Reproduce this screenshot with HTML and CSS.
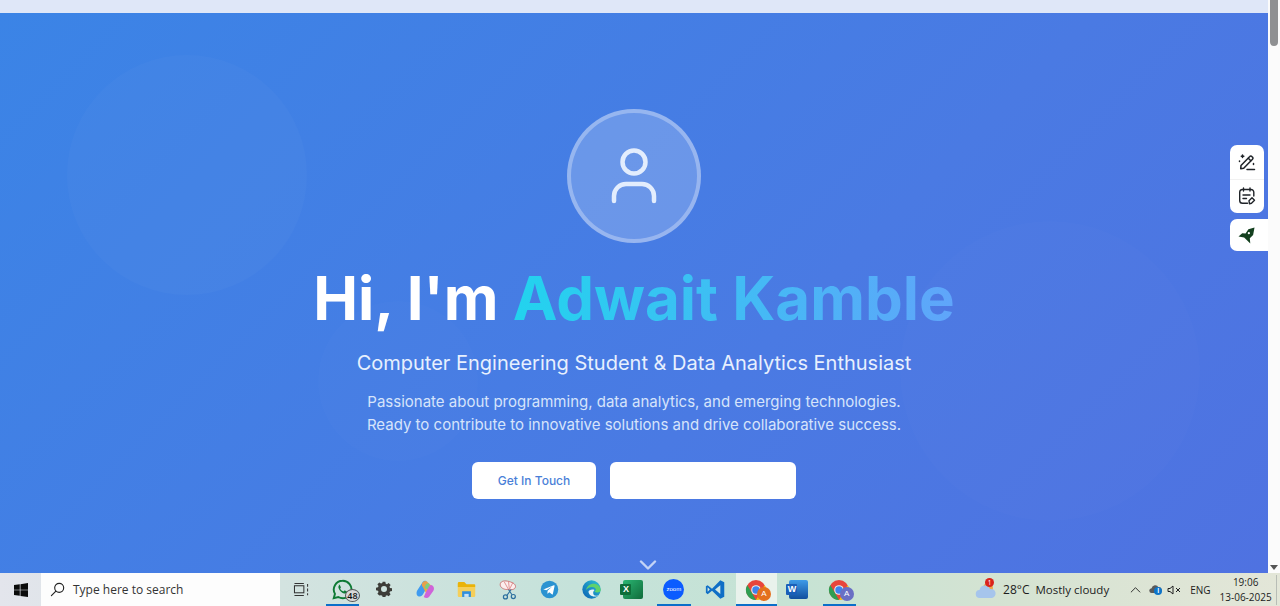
FILE: index.html
```html
<!DOCTYPE html>
<html lang="en">
<head>
<meta charset="utf-8">
<title>Adwait Kamble</title>
<link rel="stylesheet" href="styles.css">
</head>
<body>
<div class="screen">
  <div class="viewport">
    <main class="page">
      <div class="topstrip"></div>
      <section class="hero">
        <span class="blob blob-a"></span>
        <span class="blob blob-b"></span>
        <span class="blob blob-c"></span>
        <div class="avatar">
          <svg class="avatar-icon" viewBox="0 0 46 58" fill="none" stroke="#e3edfd" stroke-width="4.500" stroke-linecap="round">
            <circle cx="23" cy="15" r="11.500"/>
            <path d="M3 54V49a12 12 0 0 1 12-12h16a12 12 0 0 1 12 12v5"/>
          </svg>
        </div>
        <h1 class="title">Hi, I'm <span class="name">Adwait Kamble</span></h1>
        <h2 class="subtitle">Computer Engineering Student &amp; Data Analytics Enthusiast</h2>
        <p class="lead">Passionate about programming, data analytics, and emerging technologies.<br>Ready to contribute to innovative solutions and drive collaborative success.</p>
        <div class="actions">
          <a class="btn btn-touch">Get In Touch</a>
          <a class="btn btn-blank"></a>
        </div>
        <svg class="scroll-cue" viewBox="0 0 18 10" fill="none" stroke="#c3d3f6" stroke-width="2.400" stroke-linecap="round" stroke-linejoin="round"><path d="M2 1.500l7 7 7-7"/></svg>
      </section>
      <aside class="widget widget-tools">
        <button class="widget-btn">
          <svg viewBox="0 0 18 18" fill="none" stroke="#1f2328" stroke-width="1.500" stroke-linecap="round" stroke-linejoin="round"><path d="M3 12.500L11.800 3.500a1.300 1.300 0 0 1 2 0l.7.700a1.300 1.300 0 0 1 0 2L5.700 15.200l-3 .5z"/><path d="M10.300 5.200l2.500 2.500"/><path d="M9 16.500h7.500"/><path d="M4.500 2v2.500M3.300 3.200h2.500M1.500 8v.5M15.500 10.500v1"/></svg>
        </button>
        <button class="widget-btn">
          <svg viewBox="0 0 18 18" fill="none" stroke="#1f2328" stroke-width="1.400" stroke-linecap="round" stroke-linejoin="round"><path d="M9.500 16.300H4.500A2.800 2.800 0 0 1 1.700 13.500V5.300A2.800 2.800 0 0 1 4.500 2.500h8.500a2.800 2.800 0 0 1 2.800 2.800V9"/><path d="M5.500 1v3M12 1v3M5 8h7M5 11.500h3.500"/><path d="M11.500 16.800l-.5-3 3-3 2.500 2.500-3 3z"/></svg>
        </button>
      </aside>
      <aside class="widget widget-rocket">
        <svg viewBox="0 0 18 18" fill="#14401f"><path d="M17.500 .500L16 8.500l-3.500 3.500.5 5.500-3.500-3.500-3-3L.500 10l4-3.500 3.500.5 3-4.500z"/><circle cx="11.500" cy="6.500" r="1.200" fill="#fff"/></svg>
      </aside>
    </main>
    <div class="scrollbar">
      <span class="scroll-thumb"></span>
      <span class="scroll-down"></span>
    </div>
  </div>

  <footer class="taskbar">
    <div class="start">
      <svg viewBox="0 0 16 16" fill="#0b0b0b"><path d="M0 2.300l6.600-.9v6.200H0zM7.400 1.300L16 0v7.600H7.400zM0 8.400h6.600v6.200L0 13.700zM7.400 8.400H16V16l-8.600-1.200z"/></svg>
    </div>
    <div class="search">
      <svg viewBox="0 0 16 16" fill="none" stroke="#222" stroke-width="1.200" stroke-linecap="round"><circle cx="9.800" cy="6.200" r="4.800"/><path d="M6.300 9.700L1.500 14.500"/></svg>
      <span>Type here to search</span>
    </div>
    <div class="taskview">
      <svg viewBox="0 0 18 16" fill="none" stroke="#333" stroke-width="1.100"><rect x="1.500" y="4" width="10" height="7.500"/><path d="M1.500 1.500h10M1.500 14.500h10M15.500 2v3M15.500 7v3M15.500 12v2"/></svg>
    </div>
    <div class="apps">
      <div class="app running">
        <svg class="icon-whatsapp" viewBox="0 0 24 24" fill="none"><path d="M12 2a10 10 0 0 0-8.600 15L2 22l5.200-1.400A10 10 0 1 0 12 2z" stroke="#0e7a34" stroke-width="2.200"/><path d="M8.300 6.800c-1 .8-1.300 2.400-.6 4 1.200 2.700 3.200 4.700 6 5.700 1.600.5 2.900.1 3.500-1 .3-.6.200-1-.3-1.300l-2-1c-.5-.2-.8-.1-1.100.3l-.6.700c-3-1-3.400-2.200-3.900-3.300l.6-.7c.2-.3.300-.6.100-1l-.9-2.200c-.2-.5-.9-.7-1.800-.2z" fill="#0e7a34"/></svg>
        <span class="badge-count">48</span>
      </div>
      <div class="app">
        <svg class="icon-gear" viewBox="0 0 24 24" fill="#3d3d38"><path fill-rule="evenodd" d="M10 1h4l.6 3 1.900.8 2.500-1.700 2.900 2.900-1.700 2.500.8 1.900 3 .6v4l-3 .6-.8 1.900 1.700 2.500-2.900 2.900-2.500-1.700-1.900.8-.6 3h-4l-.6-3-1.900-.8L5 21.900 2.100 19l1.700-2.500-.8-1.900-3-.6v-4l3-.6.8-1.900L2.100 5 5 2.100l2.500 1.700 1.900-.8zM12 7.500a4.500 4.500 0 1 0 0 9 4.500 4.500 0 0 0 0-9z"/></svg>
      </div>
      <div class="app">
        <svg viewBox="0 0 24 24"><path d="M9 3c2-1.500 4-1 5 1l1 3-5 9c-1 2-3 4.500-5.500 4C2 19.500 1 16 2.500 13z" fill="#3f9bf0"/><path d="M14 3c-1-1-3-1-4.500 0C8 4 7 7 9 9l3 6 4 2 4-4 1-3z" fill="#f9a13a" opacity=".9"/><path d="M10 20.500c2 1.500 4.500 1.500 6 0l5-7c1.500-2.500.5-6-2-6.500-1.500-.3-3 1-4 3l-3 6z" fill="#cf63d9"/><path d="M12 7c1-1.500 2.500-2.500 4-2l1 2-3 5-3-2z" fill="#7ad07f"/></svg>
      </div>
      <div class="app">
        <svg viewBox="0 0 24 24"><path d="M2 5a1.500 1.500 0 0 1 1.500-1.500h6L12 6h9a1 1 0 0 1 1 1v2H2z" fill="#eab308"/><path d="M2 9h20v10a1.500 1.500 0 0 1-1.500 1.500h-17A1.500 1.500 0 0 1 2 19z" fill="#f5cf5a"/><path d="M7 14h10v6.500H7z" fill="#2f8fde"/><path d="M9.500 17h5v3.500h-5z" fill="#c7e2f6"/></svg>
      </div>
      <div class="app">
        <svg viewBox="0 0 24 24" fill="none"><path d="M10 12c-3 0-7.500-2-7.500-5.500S6 1.500 11 2.500s9 3 9 6-3.500 4.500-9 3.500z" fill="#fbeeee" stroke="#c96a6a"/><path d="M7 3l5 9M12 2.500l1 9.500M17 4l-4 8" stroke="#d88"/><path d="M12 12l4 6M15 12l-5 7" stroke="#2b6f9e" stroke-width="1.200"/><circle cx="8.500" cy="20.500" r="2.300" stroke="#2b6f9e" stroke-width="1.400"/><circle cx="17.500" cy="20" r="2.300" stroke="#2b6f9e" stroke-width="1.400"/></svg>
      </div>
      <div class="app">
        <svg viewBox="0 0 24 24"><circle cx="12" cy="12" r="10" fill="#2b93d1"/><path d="M5.500 11.700l11.500-4.600c.6-.2 1 .1.800.9l-2 9c-.1.600-.6.800-1.100.4l-3-2.200-1.500 1.400c-.3.300-.6.100-.6-.2l.2-2.900 5.300-4.800-6.700 4.200-2.900-.9c-.6-.2-.6-.7 0-.9z" fill="#fff"/></svg>
      </div>
      <div class="app">
        <svg viewBox="0 0 24 24"><defs><linearGradient id="edgeA" x1="0" y1="1" x2="1" y2="0"><stop offset="0" stop-color="#0a5fb4"/><stop offset="1" stop-color="#2ec4d6"/></linearGradient></defs><circle cx="12" cy="12" r="10.500" fill="url(#edgeA)"/><path d="M22.500 13c0-5-4-7.500-8-7.500-4.500 0-8 3-8.500 7 1.500-2.500 4-3.500 6.500-3.500 3 0 4.500 1.500 4.500 3 0 1-.7 1.800-1.500 2.200 1 1 3 1.500 4.500.8 1.500-.5 2.500-1.200 2.500-2z" fill="#5fd26c"/><path d="M8.500 14c0 3.500 3 6 7 6 2 0 3.500-.6 5-1.800-1.500 1-6 2-6.500-1.500-.5-2 1-3.500 1.500-4-3-1.500-7 .2-7 2.300z" fill="#e9f4f7"/></svg>
      </div>
      <div class="app">
        <div class="excel"><span class="doc-letter excel-letter">X</span></div>
      </div>
      <div class="app running-partial">
        <span class="zoom-mark">zoom</span>
      </div>
      <div class="app">
        <svg viewBox="0 0 24 24"><path d="M17.500 1.500L22 3.700v16.600l-4.500 2.200-9.500-9-5 3.800L1 15.800V8.200l2-1 5 3.800z" fill="#0f6fc6"/><path d="M17.500 7l-6 5 6 5z" fill="#d4e9e4"/><path d="M3 9.500v5l2.500-2.500z" fill="#d4e9e4"/></svg>
      </div>
      <div class="app active">
        <svg class="icon-chrome" viewBox="0 0 22 22"><circle cx="11" cy="11" r="10" fill="#e8453c"/><path d="M19.700 6A10 10 0 0 1 11 21l4.300-7.500z" fill="#f4c20d"/><path d="M11 21A10 10 0 0 1 2.300 6l4.400 7.500z" fill="#2f9e52"/><circle cx="11" cy="11" r="4.800" fill="#e7f1ef"/><circle cx="11" cy="11" r="3.700" fill="#3f83ee"/></svg>
        <span class="profile profile-a">A</span>
      </div>
      <div class="app">
        <div class="word"><span class="doc-letter word-letter">W</span></div>
      </div>
      <div class="app running">
        <svg class="icon-chrome" viewBox="0 0 22 22"><circle cx="11" cy="11" r="10" fill="#e8453c"/><path d="M19.700 6A10 10 0 0 1 11 21l4.300-7.500z" fill="#f4c20d"/><path d="M11 21A10 10 0 0 1 2.300 6l4.400 7.500z" fill="#2f9e52"/><circle cx="11" cy="11" r="4.800" fill="#e7f1ef"/><circle cx="11" cy="11" r="3.700" fill="#3f83ee"/></svg>
        <span class="profile profile-b">A</span>
      </div>
    </div>
    <div class="tray">
      <div class="weather">
        <svg viewBox="0 0 22 18"><circle cx="13" cy="7" r="5" fill="#f0a64b"/><path d="M5 17a4 4 0 0 1-.5-8 5.500 5.500 0 0 1 10.500-1 4.500 4.500 0 0 1 2 9z" fill="#a6c5ec"/></svg>
        <span class="weather-alert">1</span>
      </div>
      <span class="temp">28°C</span>
      <span class="sky">Mostly cloudy</span>
      <svg class="tray-chevron" viewBox="0 0 12 8" fill="none" stroke="#222" stroke-width="1"><path d="M1 6.500l5-5 5 5"/></svg>
      <div class="onedrive">
        <svg viewBox="0 0 16 12" fill="#5a5a5a"><path d="M3.500 11a3 3 0 0 1-.3-6 4.500 4.500 0 0 1 8.500-1 3.500 3.500 0 0 1 1 7z"/></svg>
        <span class="info-dot">i</span>
      </div>
      <svg class="tray-speaker" viewBox="0 0 14 12" fill="none" stroke="#222" stroke-width="1"><path d="M1 4.500h2L6 2v8L3 7.500H1z"/><path d="M9 4l4 4M13 4l-4 4"/></svg>
      <span class="lang">ENG</span>
      <div class="clock"><span>19:06</span><span>13-06-2025</span></div>
      <span class="show-desktop"></span>
    </div>
  </footer>
</div>
</body>
</html>
```
FILE: styles.css
```css
* { box-sizing: border-box; }
html, body { margin: 0; height: 100%; overflow: hidden; }
body { font-family: "Inter", "Liberation Sans", sans-serif; }

.screen { display: flex; flex-direction: column; width: 1280px; height: 606px; }
.viewport { display: flex; height: 573px; }
.page { position: relative; flex: 1; display: flex; flex-direction: column; overflow: hidden; }
.topstrip { height: 13px; background: #dfe7f8; flex: none; }

.hero {
  position: relative; flex: 1; display: flex; flex-direction: column; align-items: center;
  padding-top: 96px; overflow: hidden;
  background: linear-gradient(135deg, #3b84e6 0%, #4a7ae3 60%, #4f72e1 100%);
}
.blob { position: absolute; border-radius: 50%; background: rgba(255,255,255,.022); }
.blob-a { left: 67px; top: 42px; width: 240px; height: 240px; }
.blob-b { left: 900px; top: 208px; width: 300px; height: 300px; background: rgba(255,255,255,.012); }
.blob-c { left: 318px; top: 288px; width: 160px; height: 160px; background: rgba(255,255,255,.012); }

.avatar {
  position: relative; width: 134px; height: 134px; border-radius: 50%;
  background: rgba(255,255,255,.2); border: 4px solid rgba(255,255,255,.3);
  display: flex; align-items: center; justify-content: center;
}
.avatar-icon { width: 46px; height: 58px; }

.title { position: relative; margin: 19px 0 0; font-size: 60px; line-height: 72px; font-weight: 700; color: #fff; white-space: nowrap; }
.name { background: linear-gradient(90deg, #22d3ee, #60a5fa); -webkit-background-clip: text; background-clip: text; color: transparent; }
.subtitle { position: relative; margin: 15px 0 0; font-size: 20px; line-height: 28px; font-weight: 400; color: #e7f0fe; }
.lead { position: relative; margin: 13px 0 0; font-size: 15px; line-height: 23px; color: #d6e4fb; text-align: center; }

.actions { position: relative; display: flex; gap: 14px; margin-top: 26px; }
.btn { display: flex; align-items: center; justify-content: center; height: 37px; background: #fff; border-radius: 6px; font-size: 12px; font-weight: 500; color: #4a7fd8; }
.btn-touch { width: 124px; }
.btn-blank { width: 186px; }
.scroll-cue { position: absolute; left: 639px; bottom: 3px; width: 18px; height: 10px; }

.widget { position: absolute; background: #fff; }
.widget-tools { left: 1230px; top: 145px; width: 34px; height: 68px; border-radius: 7px; display: flex; flex-direction: column; }
.widget-btn { flex: 1; border: 0; padding: 0; background: none; display: flex; align-items: center; justify-content: center; }
.widget-btn:first-child { border-bottom: 1px solid #f1f1f1; }
.widget-btn svg { width: 18px; height: 18px; }
.widget-rocket { left: 1230px; top: 219px; width: 38px; height: 32px; border-radius: 7px 0 0 7px; display: flex; align-items: center; padding-left: 8px; }
.widget-rocket svg { width: 17px; height: 17px; }

.scrollbar { position: relative; width: 12px; background: #fbfbfb; }
.scroll-thumb { position: absolute; left: 2px; top: 0; width: 8px; height: 46px; border-radius: 0 0 4px 4px; background: #8f9092; }
.scroll-down { position: absolute; left: 2px; bottom: 3px; width: 0; height: 0; border-left: 4px solid transparent; border-right: 4px solid transparent; border-top: 5px solid #555; }

.taskbar {
  display: flex; align-items: center; height: 33px; flex: none; color: #1c1c1c;
  font-family: "Open Sans", "Liberation Sans", sans-serif; white-space: nowrap;
  background: linear-gradient(90deg, #e3e5ec 0%, #d3e3e0 22%, #c5e2da 45%, #c6e3d4 62%, #d6e3d2 80%, #e3e6d8 100%);
}
.start { width: 41px; display: flex; justify-content: center; flex: none; }
.start svg { width: 14px; height: 14px; }
.search { width: 239px; height: 33px; flex: none; background: #fdfdfd; display: flex; align-items: center; gap: 8px; padding-left: 9px; font-size: 12px; color: #333; }
.search svg { width: 15px; height: 15px; flex: none; }
.taskview { width: 42px; flex: none; display: flex; justify-content: center; }
.taskview svg { width: 17px; height: 15px; }

.apps { display: flex; height: 33px; flex: none; }
.app { position: relative; width: 41.400px; height: 33px; display: flex; align-items: center; justify-content: center; }
.app > svg { width: 21px; height: 21px; }
.app > .icon-gear { width: 16px; height: 16px; margin-bottom: 1px; }
.app > .icon-chrome { width: 22px; height: 22px; margin-right: 1px; }
.app.running::after, .app.active::after, .app.running-partial::after { content: ""; position: absolute; bottom: 0; height: 2px; background: #0b6fc9; left: 4px; right: 4px; }
.app.active { background: #e9f2ec; }
.app.active::after { left: 0; right: 0; }
.badge-count { position: absolute; left: 23px; top: 16px; width: 15px; height: 13px; border-radius: 50%; background: #d9d9d9; border: 1px solid #555; font-size: 9px; line-height: 11px; text-align: center; color: #111; font-weight: 600; }
.excel { width: 20px; height: 19px; border-radius: 2px; background: linear-gradient(135deg, #2bb673, #0f6b3a); position: relative; margin-left: 2px; }
.excel-letter { left: -3px; background: #0e6e3a; }
.doc-letter { position: absolute; top: 4px; width: 11px; height: 11px; border-radius: 1px; color: #fff; font-size: 9px; line-height: 11px; font-weight: 700; text-align: center; font-family: "Liberation Sans", sans-serif; }
.word { width: 19px; height: 19px; border-radius: 2px; background: linear-gradient(180deg, #3e9be8, #124f9e); position: relative; margin-left: 2px; }
.word-letter { left: -3px; background: #1a5fb8; }
.zoom-mark { width: 21px; height: 21px; border-radius: 50%; background: #0b5cff; color: #fff; font-size: 6px; line-height: 21px; text-align: center; font-family: "Liberation Sans", sans-serif; }
.profile { position: absolute; left: 21px; top: 14px; width: 14px; height: 14px; border-radius: 50%; color: #fff; font-size: 8px; line-height: 14px; text-align: center; font-family: "Liberation Sans", sans-serif; }
.profile-a { background: #e4701e; }
.profile-b { background: #6a6fc4; }

.tray { display: flex; align-items: center; flex: 1; height: 33px; padding-left: 115px; position: relative; }
.weather { position: relative; width: 22px; height: 18px; flex: none; }
.weather svg { width: 22px; height: 18px; display: block; }
.weather-alert { position: absolute; left: 10px; top: -3px; width: 9px; height: 9px; border-radius: 50%; background: #d9241c; color: #fff; font-size: 6.500px; line-height: 9px; text-align: center; }
.temp { margin-left: 6px; font-size: 12px; }
.sky { margin-left: 6px; font-size: 11.500px; }
.tray-chevron { width: 11px; height: 8px; margin-left: 21px; flex: none; }
.onedrive { position: relative; width: 13px; height: 11px; margin-left: 8px; flex: none; }
.onedrive svg { width: 13px; height: 10px; display: block; }
.info-dot { position: absolute; left: 5px; top: 3px; width: 8px; height: 8px; border-radius: 50%; background: #0e74c8; color: #fff; font-size: 6.500px; line-height: 8px; text-align: center; font-weight: 700; }
.tray-speaker { width: 14px; height: 12px; margin-left: 5px; flex: none; }
.lang { margin-left: 9px; font-size: 10px; }
.clock { display: flex; flex-direction: column; align-items: center; margin-left: 9px; font-size: 10px; line-height: 15px; }
.show-desktop { position: absolute; right: 3px; top: 2px; width: 1px; height: 30px; background: #b8bdb6; }
```
